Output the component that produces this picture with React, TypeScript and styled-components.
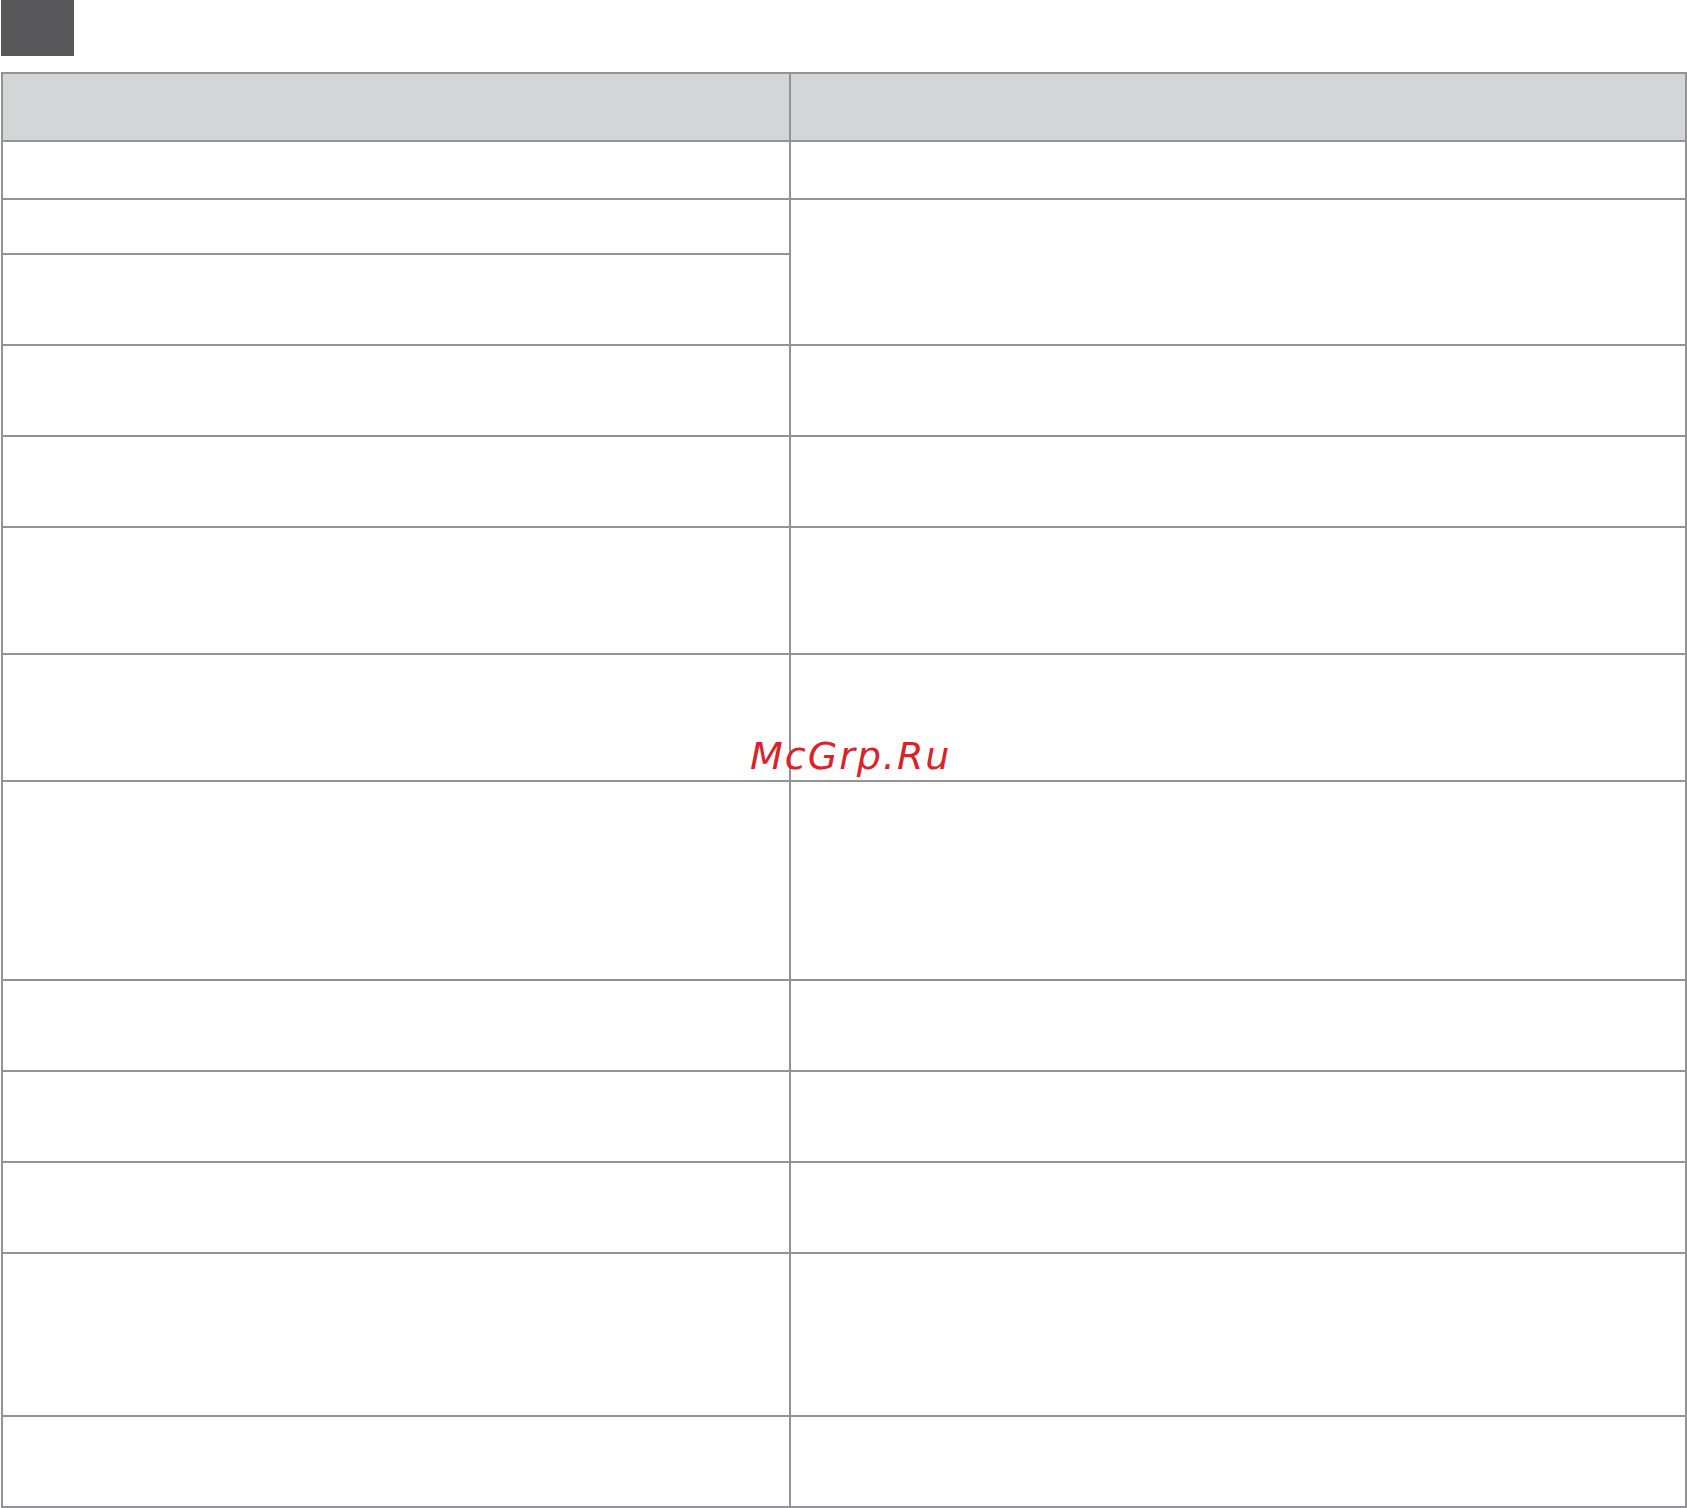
import React from "react";
import styled, { createGlobalStyle } from "styled-components";

const Global = createGlobalStyle`
  html, body { margin: 0; padding: 0; background: #ffffff; }
  body { font-family: "DejaVu Sans", sans-serif; }
`;

const Page = styled.div`
  position: relative;
  width: 1687px;
  height: 1508px;
  padding-left: 1px;
  box-sizing: border-box;
  display: flex;
  flex-direction: column;
  gap: 16px;
  background: #ffffff;
`;

const Tab = styled.div`
  width: 73px;
  height: 56px;
  background: #58585a;
`;

const Grid = styled.div`
  display: grid;
  grid-template-columns: 788px 894px;
  grid-template-rows: 68px 58px 55px 91px 91px 91px 127px 127px 199px 91px 91px 91px 163px 89px;
  width: 1686px;
  box-sizing: border-box;
  border: 2px solid #939396;
`;

const Cell = styled.div<{ $head?: boolean; $left?: boolean; $last?: boolean; $span?: number }>`
  box-sizing: border-box;
  background: ${(p) => (p.$head ? "#d4d5d7" : "#ffffff")};
  border-right: ${(p) => (p.$left ? "2px solid #939396" : "none")};
  border-bottom: ${(p) => (p.$last ? "none" : "2px solid #939396")};
  grid-row: ${(p) => (p.$span ? `span ${p.$span}` : "auto")};
`;

const Watermark = styled.div`
  position: absolute;
  left: 750px;
  top: 737px;
  font-family: "DejaVu Sans", sans-serif;
  font-style: italic;
  font-size: 38px;
  line-height: 38px;
  letter-spacing: 2px;
  color: #d8232a;
  white-space: nowrap;
`;

type Row = { right: boolean };

// rows after the header; right: false means the right cell is spanned from above
const rows: Row[] = [
  { right: true },
  { right: true },
  { right: false },
  { right: true },
  { right: true },
  { right: true },
  { right: true },
  { right: true },
  { right: true },
  { right: true },
  { right: true },
  { right: true },
  { right: true },
];

export default function App() {
  return (
    <>
      <Global />
      <Page>
        <Tab />
        <Grid>
          <Cell $head $left />
          <Cell $head />
          {rows.map((r, i) => {
            const last = i === rows.length - 1;
            const spanNext = i + 1 < rows.length && !rows[i + 1].right;
            return (
              <React.Fragment key={i}>
                <Cell $left $last={last} />
                {r.right && <Cell $last={last} $span={spanNext ? 2 : undefined} />}
              </React.Fragment>
            );
          })}
        </Grid>
        <Watermark>McGrp.Ru</Watermark>
      </Page>
    </>
  );
}
